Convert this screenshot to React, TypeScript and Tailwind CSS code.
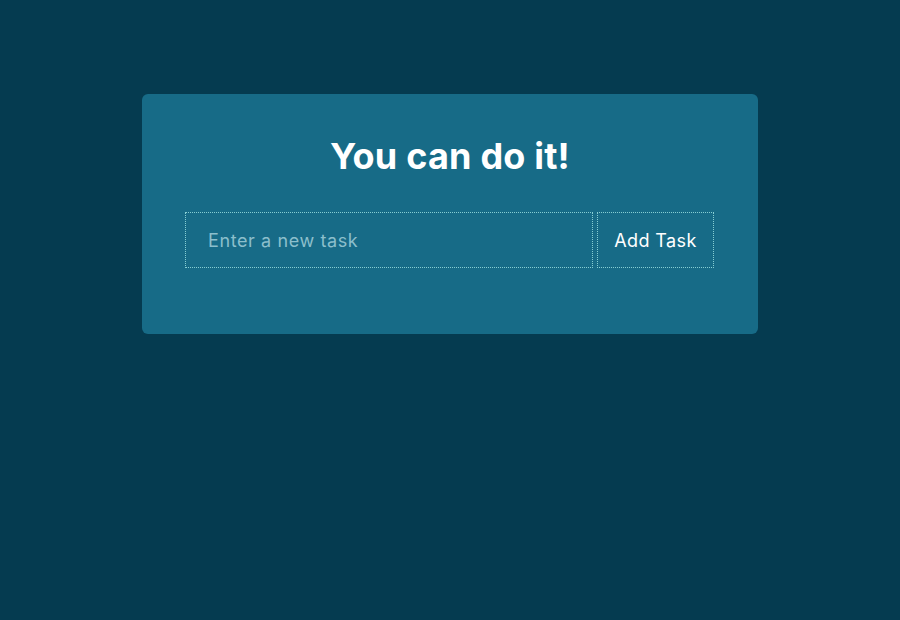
export default function App() {
  return (
    <div
      className="min-h-screen w-full bg-[#053B50] pt-[94px]"
      style={{ fontFamily: 'Inter, "Open Sans", sans-serif' }}
    >
      <div className="mx-auto w-[616px] rounded-md bg-[#176B87] px-[43px] pt-[40px] pb-[66px]">
        <h1 className="mb-[34px] text-center text-[36px] leading-[44px] font-bold tracking-[0.2px] text-white">
          You can do it!
        </h1>
        <form className="flex gap-[4px]" onSubmit={(e) => e.preventDefault()}>
          <input
            type="text"
            placeholder="Enter a new task"
            className="h-[56px] w-[408px] border border-dotted border-[#86cdd2] bg-transparent px-[22px] text-[18px] tracking-[0.6px] text-white outline-none placeholder:text-[#8cbfcc]"
          />
          <button
            type="submit"
            className="h-[56px] w-[117px] border border-dotted border-[#86cdd2] bg-transparent text-[18px] tracking-[0.4px] text-white"
          >
            Add Task
          </button>
        </form>
      </div>
    </div>
  );
}
